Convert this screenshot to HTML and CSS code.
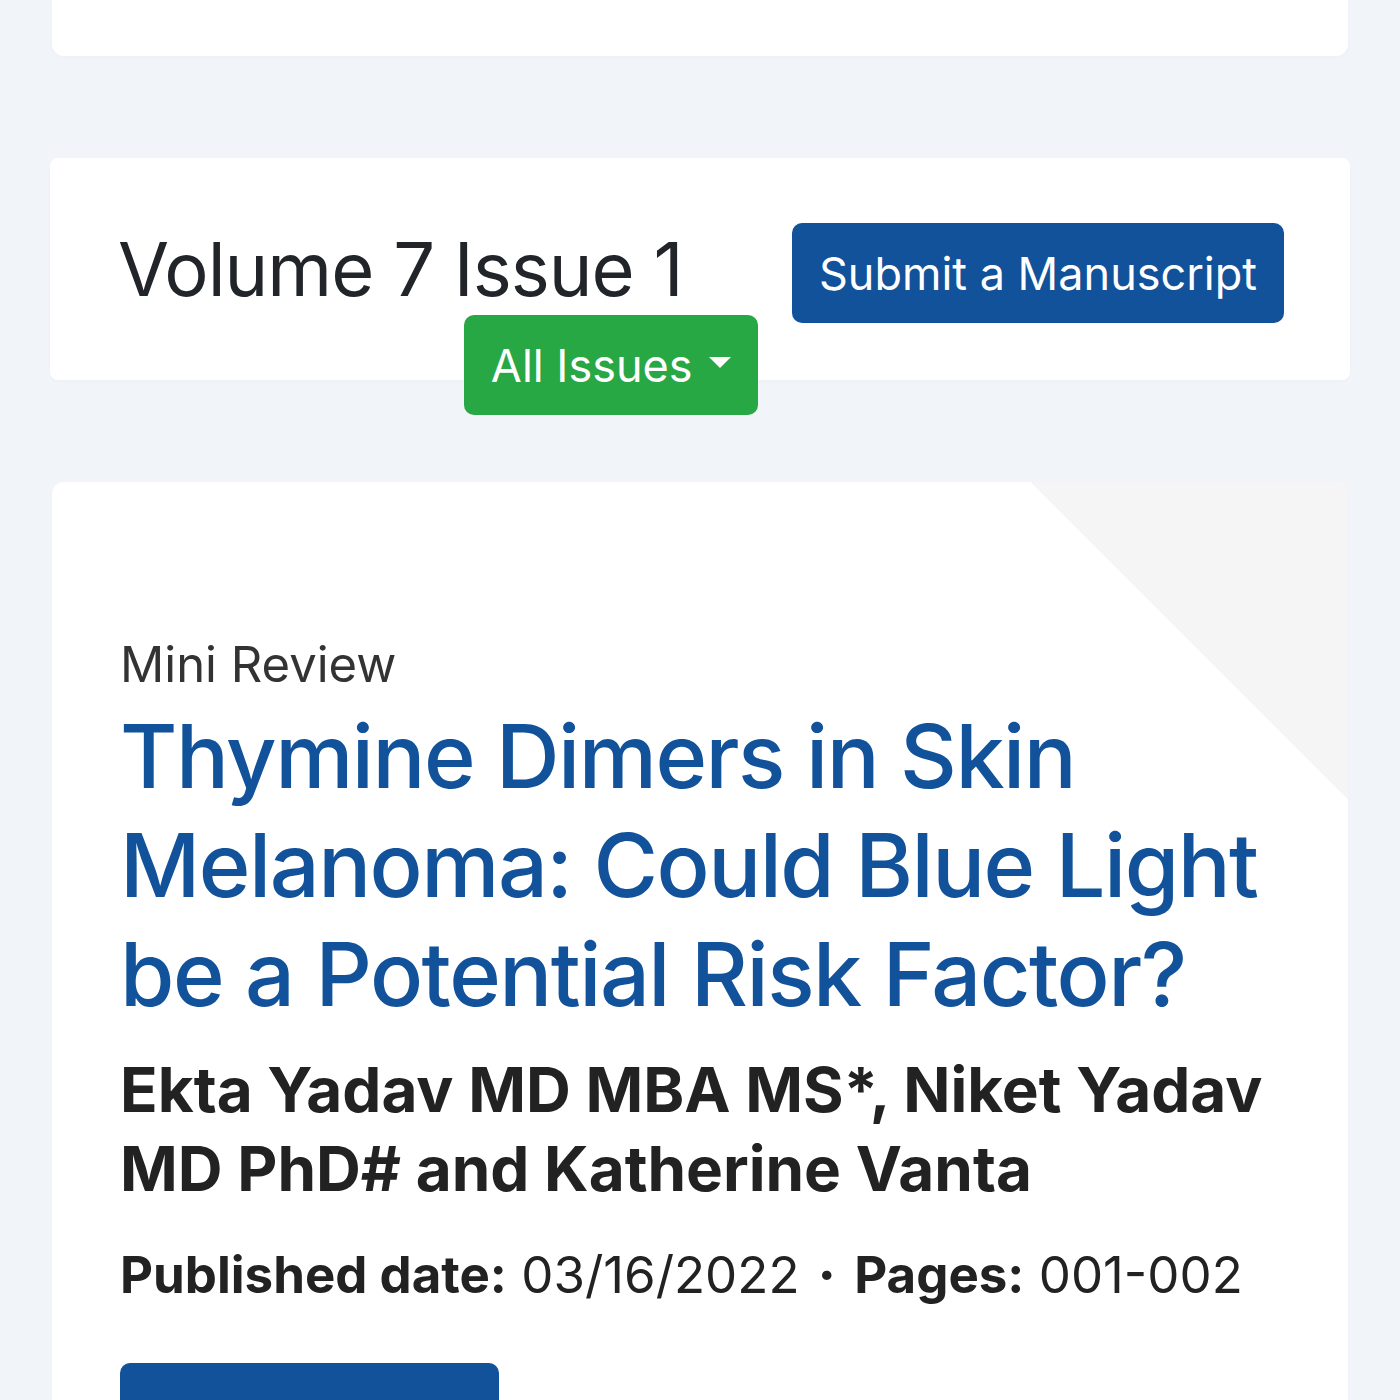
FILE: index.html
```html
<!DOCTYPE html>
<html>
<head>
    <meta charset="utf-8">
    <title>Volume 7 Issue 1</title>
    <link rel="stylesheet" href="styles.css">
</head>
<body>

    <div class="Card TopCard"></div>

    <div class="Card IssueCard">
        <div class="IssueLeft">
            <h2 class="IssueTitle">Volume 7 Issue 1</h2>
            <button class="Btn BtnGreen">All Issues <span class="Caret"></span></button>
        </div>
        <div class="IssueRight">
            <button class="Btn BtnBlue">Submit a Manuscript</button>
        </div>
    </div>

    <div class="Card ArticleCard">
        <div class="Corner"></div>
        <div class="ArticleType">Mini Review</div>
        <h1 class="ArticleTitle">Thymine Dimers in Skin Melanoma: Could Blue Light be a Potential Risk Factor?</h1>
        <div class="Authors">Ekta Yadav MD MBA MS*, Niket Yadav MD PhD# and Katherine Vanta</div>
        <div class="Meta">
            <b>Published date:</b> 03/16/2022 <span class="Dot">&middot;</span> <b>Pages:</b> 001-002
        </div>
        <button class="Btn BtnBlue ReadBtn">Full Text</button>
    </div>

</body>
</html>
```

FILE: styles.css
```css
body {
    margin: 0;
    background: #f1f4f8;
    font-family: Inter, "Noto Sans", sans-serif;
    color: #212529;
    overflow: hidden;
    height: 1400px;
}

.Card {
    background: #fff;
    border-radius: 12px;
    margin: 0 52px;
    box-shadow: 0 2px 4px rgba(0, 0, 0, 0.02);
}

.TopCard {
    height: 56px;
    border-radius: 0 0 12px 12px;
}

.IssueCard {
    margin-top: 102px;
    height: 222px;
    box-sizing: border-box;
    padding: 65px 66px 0 68px;
    display: grid;
    grid-template-columns: 1fr 492px;
    column-gap: 34px;
    margin-left: 50px;
    margin-right: 50px;
    border-radius: 8px;
}

.IssueLeft {
    display: flex;
    flex-direction: column;
    align-items: flex-start;
}

.IssueTitle {
    margin: 0;
    height: 92px;
    font-size: 74px;
    font-weight: 400;
    line-height: 92px;
    letter-spacing: -1px;
}

.Btn {
    border: none;
    border-radius: 10px;
    color: #fff;
    font-family: inherit;
    font-size: 45px;
    height: 100px;
    padding: 0 26px;
    cursor: pointer;
}

.BtnGreen {
    background: #28a745;
    align-self: flex-end;
    width: 294px;
}

.BtnBlue {
    background: #11529a;
    width: 100%;
}

.Caret {
    display: inline-block;
    width: 0;
    height: 0;
    border-left: 11px solid transparent;
    border-right: 11px solid transparent;
    border-top: 11px solid #fff;
    vertical-align: 14px;
    margin-left: 4px;
}

.ArticleCard {
    position: relative;
    margin-top: 102px;
    padding: 150px 68px 0 68px;
    height: 1000px;
    overflow: hidden;
}

/* pale fold in the top right corner */
.Corner {
    position: absolute;
    top: 0;
    right: 0;
    width: 318px;
    height: 318px;
    background: linear-gradient(to bottom left, #f5f5f6 50%, transparent 50%);
}

.ArticleType {
    position: relative;
    font-size: 49px;
    color: #333;
    line-height: 66px;
}

.ArticleTitle {
    position: relative;
    margin: 4px 0 0;
    font-size: 88px;
    font-weight: 500;
    line-height: 109px;
    color: #11529a;
    letter-spacing: -1.5px;
}

.Authors {
    margin-top: 21px;
    font-size: 62px;
    font-weight: 700;
    line-height: 79px;
    color: #222;
}

.Meta {
    margin-top: 36px;
    font-size: 51px;
    color: #222;
}

.Dot {
    font-weight: 800;
    padding: 0 4px;
}

.ReadBtn {
    display: block;
    width: 379px;
    height: 140px;
    margin-top: 58px;
    padding-top: 60px;
}
```
